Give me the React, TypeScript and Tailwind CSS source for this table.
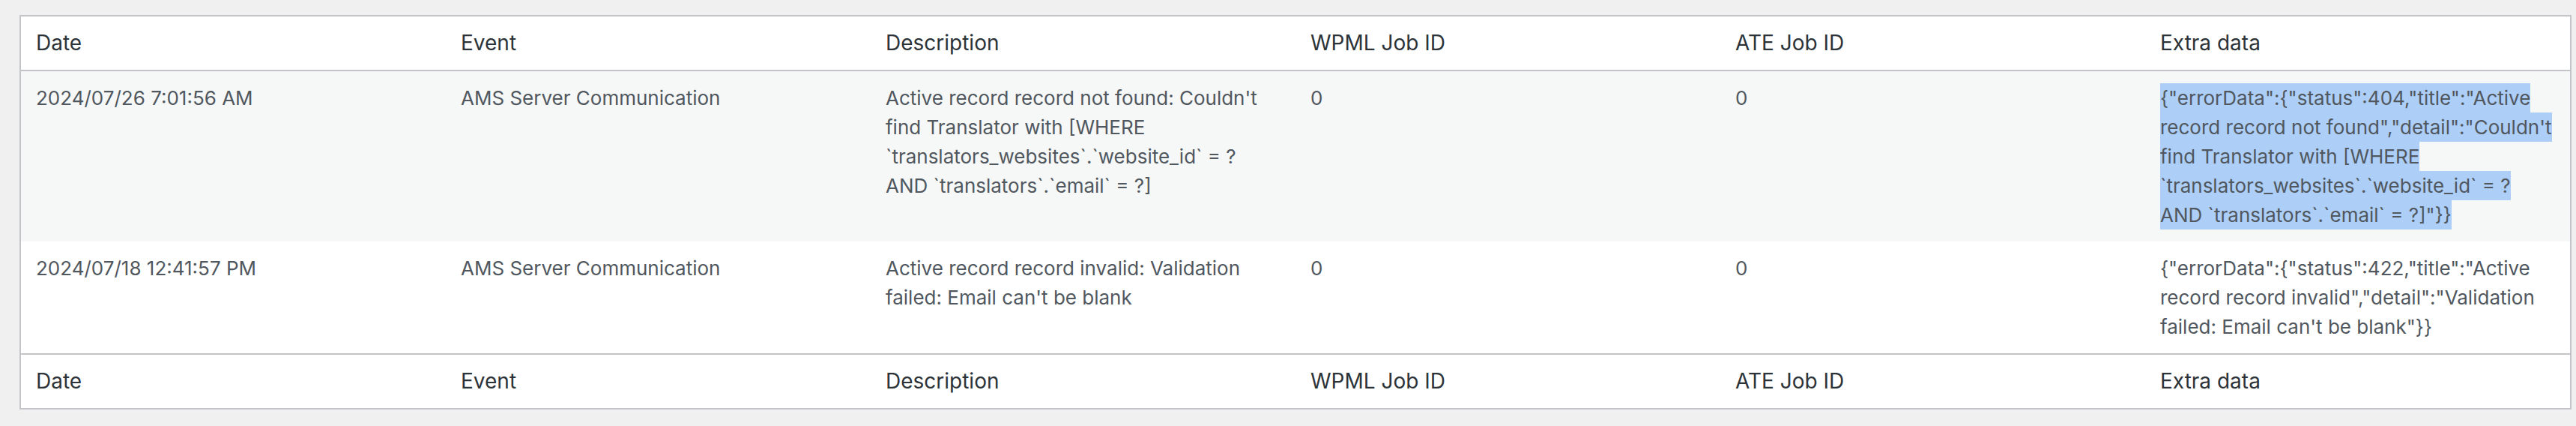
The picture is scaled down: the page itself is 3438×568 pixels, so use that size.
const rows = [
  {
    date: "2024/07/26 7:01:56 AM",
    event: "AMS Server Communication",
    description:
      "Active record record not found: Couldn't find Translator with [WHERE `translators_websites`.`website_id` = ? AND `translators`.`email` = ?]",
    wpmlJobId: "0",
    ateJobId: "0",
    extra:
      '{"errorData":{"status":404,"title":"Active record record not found","detail":"Couldn\'t find Translator with [WHERE `translators_websites`.`website_id` = ? AND `translators`.`email` = ?]"}}',
    selected: true,
  },
  {
    date: "2024/07/18 12:41:57 PM",
    event: "AMS Server Communication",
    description:
      "Active record record invalid: Validation failed: Email can't be blank",
    wpmlJobId: "0",
    ateJobId: "0",
    extra:
      '{"errorData":{"status":422,"title":"Active record record invalid","detail":"Validation failed: Email can\'t be blank"}}',
    selected: false,
  },
];

const columns = [
  "Date",
  "Event",
  "Description",
  "WPML Job ID",
  "ATE Job ID",
  "Extra data",
];

const thClass =
  "px-5 py-4 text-left text-[28px] leading-[39px] font-normal text-[#2c3338]";

const App = () => {
  return (
    <div
      className="min-h-[568px] bg-[#f0f0f1] pt-5 pl-[26px]"
      style={{ fontFamily: "Inter, 'Noto Sans', sans-serif" }}
    >
      <table className="w-[3406px] table-fixed border-separate border-spacing-0 border-2 border-[#c3c4c7] bg-white">
        <thead>
          <tr>
            {columns.map((col) => (
              <th key={col} className={thClass}>
                {col}
              </th>
            ))}
          </tr>
        </thead>
        <tbody>
          {rows.map((row, i) => {
            const cell =
              "px-5 py-4 align-top text-[26px] leading-[39px] text-[#50575e] break-words" +
              (i === 0 ? " border-t-2 border-[#c3c4c7]" : "");
            return (
              <tr key={row.date} className={i % 2 === 0 ? "bg-[#f6f7f7]" : "bg-white"}>
                <td className={cell}>{row.date}</td>
                <td className={cell}>{row.event}</td>
                <td className={cell}>{row.description}</td>
                <td className={cell}>{row.wpmlJobId}</td>
                <td className={cell}>{row.ateJobId}</td>
                <td className={cell}>
                  {row.selected ? (
                    <span className="bg-[#accef7] py-[4px]">{row.extra}</span>
                  ) : (
                    row.extra
                  )}
                </td>
              </tr>
            );
          })}
        </tbody>
        <tfoot>
          <tr>
            {columns.map((col) => (
              <th key={col} className={"border-t-2 border-[#c3c4c7] " + thClass}>
                {col}
              </th>
            ))}
          </tr>
        </tfoot>
      </table>
    </div>
  );
};

export default App;
